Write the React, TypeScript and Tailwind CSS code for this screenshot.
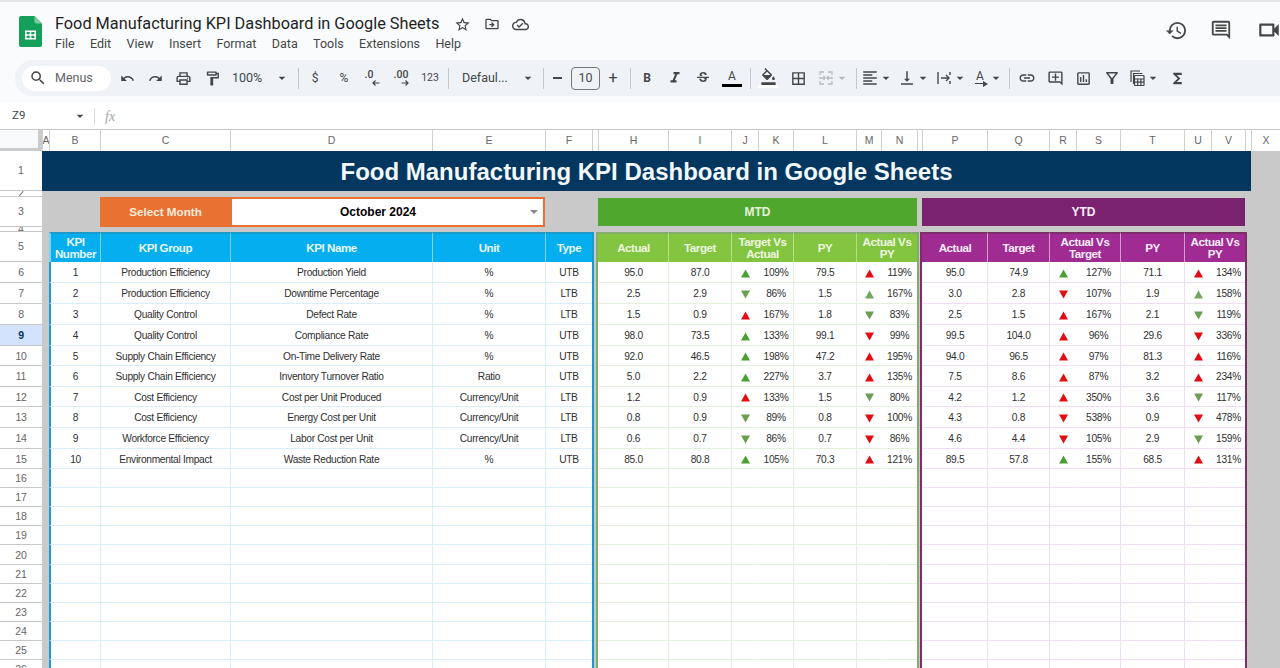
import type {ReactNode} from "react";
import {
    MdArrowDropDown,
    MdBorderAll,
    MdFormatAlignLeft,
    MdFormatColorFill,
    MdFormatItalic,
    MdFunctions,
    MdHistory,
    MdLink,
    MdOutlineAddComment,
    MdOutlineCloudDone,
    MdOutlineComment,
    MdOutlineDriveFileMove,
    MdOutlineFilterAlt,
    MdOutlineFormatPaint,
    MdOutlineInsertChart,
    MdOutlineLocalPrintshop,
    MdOutlineStarBorder,
    MdOutlineVideocam,
    MdRedo,
    MdSearch,
    MdStrikethroughS,
    MdUndo,
    MdVerticalAlignBottom,
} from "react-icons/md";

const GRID = "grid grid-cols-[42px_7px_51px_130px_202px_113px_47px_6px_70px_63px_27px_35px_63px_25px_36px_5px_65px_62px_27px_44px_64px_27px_34px_6px_29px]";

type Tone = "ug" | "ul" | "dg" | "ur" | "dr";
type Metric = [string, string, Tone, string, string, Tone, string];

const KPIS = [
    ["1", "Production Efficiency", "Production Yield", "%", "UTB"],
    ["2", "Production Efficiency", "Downtime Percentage", "%", "LTB"],
    ["3", "Quality Control", "Defect Rate", "%", "LTB"],
    ["4", "Quality Control", "Compliance Rate", "%", "UTB"],
    ["5", "Supply Chain Efficiency", "On-Time Delivery Rate", "%", "UTB"],
    ["6", "Supply Chain Efficiency", "Inventory Turnover Ratio", "Ratio", "UTB"],
    ["7", "Cost Efficiency", "Cost per Unit Produced", "Currency/Unit", "LTB"],
    ["8", "Cost Efficiency", "Energy Cost per Unit", "Currency/Unit", "LTB"],
    ["9", "Workforce Efficiency", "Labor Cost per Unit", "Currency/Unit", "LTB"],
    ["10", "Environmental Impact", "Waste Reduction Rate", "%", "UTB"],
];

const MTD: Metric[] = [
    ["95.0", "87.0", "ug", "109%", "79.5", "ur", "119%"],
    ["2.5", "2.9", "dg", "86%", "1.5", "ul", "167%"],
    ["1.5", "0.9", "ur", "167%", "1.8", "dg", "83%"],
    ["98.0", "73.5", "ug", "133%", "99.1", "dr", "99%"],
    ["92.0", "46.5", "ug", "198%", "47.2", "ur", "195%"],
    ["5.0", "2.2", "ug", "227%", "3.7", "ur", "135%"],
    ["1.2", "0.9", "ur", "133%", "1.5", "dg", "80%"],
    ["0.8", "0.9", "dg", "89%", "0.8", "dr", "100%"],
    ["0.6", "0.7", "dg", "86%", "0.7", "dr", "86%"],
    ["85.0", "80.8", "ug", "105%", "70.3", "ur", "121%"],
];

const YTD: Metric[] = [
    ["95.0", "74.9", "ug", "127%", "71.1", "ur", "134%"],
    ["3.0", "2.8", "dr", "107%", "1.9", "ul", "158%"],
    ["2.5", "1.5", "ur", "167%", "2.1", "dg", "119%"],
    ["99.5", "104.0", "ur", "96%", "29.6", "dr", "336%"],
    ["94.0", "96.5", "ur", "97%", "81.3", "ur", "116%"],
    ["7.5", "8.6", "ur", "87%", "3.2", "ur", "234%"],
    ["4.2", "1.2", "ur", "350%", "3.6", "dg", "117%"],
    ["4.3", "0.8", "dr", "538%", "0.9", "dr", "478%"],
    ["4.6", "4.4", "dr", "105%", "2.9", "dg", "159%"],
    ["89.5", "57.8", "ug", "155%", "68.5", "ur", "131%"],
];

const ROW_HEIGHTS = ["h-[21px]", "h-[21px]", "h-[21px]", "h-[21px]", "h-[20px]", "h-[21px]", "h-[20px]", "h-[21px]", "h-[21px]", "h-[20px]"];
const EMPTY_ROWS = [16, 17, 18, 19, 20, 21, 22, 23, 24, 25, 26];
const COLUMNS = ["A", "B", "C", "D", "E", "F", "", "H", "I", "J", "K", "L", "M", "N", "", "P", "Q", "R", "S", "T", "U", "V", "", "X"];
const MENUS = ["File", "Edit", "View", "Insert", "Format", "Data", "Tools", "Extensions", "Help"];

const TONE_FILL: Record<Tone, string> = {
    ug: "#4a9f32",
    ul: "#6fa75c",
    dg: "#6a9f52",
    ur: "#e40c12",
    dr: "#e40c12",
};

const Tri = ({tone}: {tone: Tone}) => (
    <svg width="9" height="9" viewBox="0 0 9 9" fill={TONE_FILL[tone]}>
        <polygon points={tone[0] === "d" ? "0,0.5 9,0.5 4.5,8.5" : "4.5,0.5 9,8.5 0,8.5"}/>
    </svg>
);

const RowLabel = ({children, active, low}: {children: ReactNode; active?: boolean; low?: boolean}) => (
    <div className={`flex items-center justify-center overflow-hidden border-b border-[#c7c7c7] text-[10.5px] ${low ? "pt-[2px]" : "pt-px"} ${active ? "bg-[#d3e3fd] font-bold text-[#0b2f66]" : "bg-white text-[#666]"}`}>
        {children}
    </div>
);

const Gray = ({span}: {span?: string}) => <div className={`bg-[#c9c9c9] ${span ?? ""}`}/>;

const GapBG = () => <div className="border-l-2 border-r-2 border-l-[#1b9ac9] border-r-[#84ab6e] bg-[#c9c9c9]"/>;
const GapGP = () => <div className="border-l-2 border-r-2 border-l-[#84ab6e] border-r-[#7b2f69] bg-[#c9c9c9]"/>;
const GapP = () => <div className="border-l-2 border-l-[#7b2f69] bg-[#c9c9c9]"/>;

const BlueCell = ({children, first}: {children?: ReactNode; first?: boolean}) => (
    <div className={`flex items-center justify-center border-b border-[#d9eef8] bg-white pt-[2px] ${first ? "border-l-2 border-l-[#1b9ac9]" : "border-l"}`}>
        {children}
    </div>
);
// plain: no column line on the left, the cell belongs to the one before it
const GreenCell = ({children, plain}: {children?: ReactNode; plain?: boolean}) => (
    <div className={`flex items-center justify-center border-b border-l border-[#e2f0dc] bg-white pt-[2px] ${plain ? "border-l-transparent" : ""}`}>{children}</div>
);
const PurpleCell = ({children, plain}: {children?: ReactNode; plain?: boolean}) => (
    <div className={`flex items-center justify-center border-b border-l border-[#f1def4] bg-white pt-[2px] ${plain ? "border-l-transparent" : ""}`}>{children}</div>
);

const HeadCell = ({children, className}: {children: ReactNode; className: string}) => (
    <div className={`flex items-center justify-center border-l border-t-2 text-center text-[11.6px] font-bold leading-[12px] tracking-[-0.45px] ${className}`}>
        {children}
    </div>
);

const BLUE_HEAD = "border-l-[#7ed3f5] border-t-[#1b9ac9] bg-[#04aeef] text-[#e8f8ff]";
const GREEN_HEAD = "border-l-[#b5dc88] border-t-[#84ab6e] bg-[#83c441] text-[#eef7e0]";
const PURPLE_HEAD = "border-l-[#d39ccb] border-t-[#7b2f69] bg-[#a02b93] text-[#fbeefa]";

const Btn = ({w, children}: {w: string; children?: ReactNode}) => (
    <div className={`flex h-full shrink-0 items-center justify-center text-[#444746] ${w}`}>{children}</div>
);
const Sep = ({m}: {m: string}) => <div className={`h-[21px] w-px shrink-0 bg-[#c7c7c7] ${m}`}/>;
const Caret = ({light}: {light?: boolean}) => (
    <MdArrowDropDown size={16} className={`-ml-[1px] shrink-0 ${light ? "text-[#b8bbbd]" : "text-[#444746]"}`}/>
);

const SmallArrow = ({left}: {left?: boolean}) => (
    <svg width="8" height="6" viewBox="0 0 8 6" fill="none" stroke="#444746" strokeWidth="1.2" className="ml-[7px]">
        {left ? <path d="M7.5 3H1M3.5 .5 1 3l2.5 2.5"/> : <path d="M.5 3H7M4.5 .5 7 3 4.5 5.5"/>}
    </svg>
);

const SheetsLogo = () => (
    <svg width="23" height="31" viewBox="0 0 23 31" className="shrink-0">
        <path d="M2 0h13.5L23 7.5V29a2 2 0 0 1-2 2H2a2 2 0 0 1-2-2V2a2 2 0 0 1 2-2Z" fill="#14a05a"/>
        <path d="M15.5 0 23 7.5h-5.5a2 2 0 0 1-2-2Z" fill="#7ccba2"/>
        <path d="M6 14.5h11v9H6Zm1.6 1.5v2.3h3.1V16Zm4.7 0v2.3h3.1V16Zm-4.7 3.8V22h3.1v-2.2Zm4.7 0V22h3.1v-2.2Z" fill="#fff" fillRule="evenodd"/>
    </svg>
);

const MergeIcon = () => (
    <svg width="18" height="18" viewBox="0 0 18 18" fill="none" stroke="#b8bbbd" strokeWidth="1.3">
        <path d="M7 3H3v3M3 8v2M3 12v3h4M11 3h4v3M15 8v2M15 12v3h-4"/>
        <path d="M3.5 9H8M6.5 7 8 9l-1.5 2M14.5 9H10M11.5 7 10 9l1.5 2"/>
    </svg>
);

const OverflowIcon = () => (
    <svg width="18" height="18" viewBox="0 0 18 18" fill="none" stroke="#444746" strokeWidth="1.4">
        <path d="M3 3v12M15 3v3M15 12v3M6 9h8M11 6l3 3-3 3"/>
    </svg>
);

const RotateIcon = () => (
    <span className="relative flex h-[18px] w-[18px] flex-col items-center text-[12px] leading-[14px] text-[#444746]">
        A
        <span className="h-px w-[11px] bg-[#444746]"/>
        <svg width="5" height="6" viewBox="0 0 5 6" fill="#444746" className="absolute bottom-0 right-[1px]">
            <path d="M0 0l5 3-5 3Z"/>
        </svg>
    </span>
);

const TableIcon = () => (
    <svg width="18" height="18" viewBox="0 0 18 18" fill="none" stroke="#444746" strokeWidth="1.2">
        <path d="M3 13V2h9"/>
        <path d="M5.5 15V4.5h9"/>
        <rect x="6.5" y="6.5" width="9.5" height="10" rx=".5"/>
        <path d="M6.5 10h9.5M6.5 13.2h9.5M9.7 10v6.5M12.9 10v6.5"/>
    </svg>
);

export default function App() {
    return (
        <div className="flex h-[668px] w-[1280px] flex-col overflow-hidden bg-[#f9fbfd] font-[Roboto,sans-serif]">
            {/* title bar */}
            <div className="flex h-[60px] shrink-0 border-t-2 border-[#e3e3e3] pl-[19px]">
                <div className="pt-[14px]">
                    <SheetsLogo/>
                </div>
                <div className="ml-[13px] flex flex-col pt-[11px]">
                    <div className="flex h-[22px] items-center">
                        <span className="w-[399px] whitespace-nowrap text-[16.3px] text-[#1f1f1f]">Food Manufacturing KPI Dashboard in Google Sheets</span>
                        <MdOutlineStarBorder size={17} className="text-[#444746]"/>
                        <MdOutlineDriveFileMove size={16} className="ml-[13px] text-[#444746]"/>
                        <MdOutlineCloudDone size={17} className="ml-[12px] text-[#444746]"/>
                    </div>
                    <div className="-mt-px flex h-[20px] items-center gap-[15.4px] text-[12.5px] text-[#444746]">
                        {MENUS.map(m => <span key={m}>{m}</span>)}
                    </div>
                </div>
                <div className="ml-auto mb-[2px] flex items-center text-[#444746]">
                    <MdHistory size={23}/>
                    <MdOutlineComment size={22} className="ml-[22px]"/>
                    <MdOutlineVideocam size={26} className="-mr-[2px] ml-[24px]"/>
                </div>
            </div>

            {/* toolbar */}
            <div className="ml-[15px] flex h-[36px] shrink-0 items-center rounded-l-[18px] bg-[#eff3f8] pl-[7px] text-[#444746]">
                <div className="flex h-[25px] w-[89px] shrink-0 items-center rounded-full bg-white pl-[7px] text-[12.5px] text-[#5f6368]">
                    <MdSearch size={18} className="text-[#444746]"/>
                    <span className="ml-[8px]">Menus</span>
                </div>
                <Btn w="w-[28px] ml-[2px]"><MdUndo size={15}/></Btn>
                <Btn w="w-[28px]"><MdRedo size={15}/></Btn>
                <Btn w="w-[28px]"><MdOutlineLocalPrintshop size={17}/></Btn>
                <Btn w="w-[30px]"><MdOutlineFormatPaint size={17}/></Btn>
                <Btn w="w-[63px] pl-[5px] text-[12.5px]"><span className="w-[43px]">100%</span><Caret/></Btn>
                <Sep m="ml-[8px]"/>
                <Btn w="w-[28px] ml-[2px] text-[12px]">$</Btn>
                <Btn w="w-[28px] ml-px text-[12px]">%</Btn>
                <Btn w="w-[28px]">
                    <span className="flex flex-col items-start text-[10.5px] font-medium leading-[10px]">.0<SmallArrow left/></span>
                </Btn>
                <Btn w="w-[28px] ml-px">
                    <span className="flex flex-col items-start text-[10.5px] font-medium leading-[10px]">.00<SmallArrow/></span>
                </Btn>
                <Btn w="w-[28px] ml-px text-[10.5px]">123</Btn>
                <Sep m="ml-[4px]"/>
                <Btn w="w-[84px] ml-[3px] pl-[10px] justify-start text-[12.5px]"><span className="w-[64px] whitespace-nowrap">Defaul...</span><Caret/></Btn>
                <Sep m="ml-[7px]"/>
                <Btn w="w-[27px]"><span className="h-[1.5px] w-[9px] bg-[#444746]"/></Btn>
                <div className="flex h-[23px] w-[29px] shrink-0 items-center justify-center rounded-[4px] border border-[#747775] text-[12.5px]">10</div>
                <Btn w="w-[26px] text-[16px]">+</Btn>
                <Sep m="ml-[4px]"/>
                <Btn w="w-[28px] ml-[2px] text-[12px] font-bold">B</Btn>
                <Btn w="w-[28px]"><MdFormatItalic size={18}/></Btn>
                <Btn w="w-[28px]"><MdStrikethroughS size={16}/></Btn>
                <Btn w="w-[30px]">
                    <span className="flex flex-col items-center text-[12px] leading-[14px]">A<span className="mt-[1px] h-[3.5px] w-[20px] bg-black"/></span>
                </Btn>
                <Sep m="ml-[3px]"/>
                <Btn w="w-[28px] ml-[3px]">
                    <span className="flex flex-col items-center"><MdFormatColorFill size={17}/><span className="h-[3.5px] w-[20px] bg-white"/></span>
                </Btn>
                <Btn w="w-[28px] ml-[2px]"><MdBorderAll size={17}/></Btn>
                <Btn w="w-[36px] ml-[3px]"><MergeIcon/><Caret light/></Btn>
                <Sep m="ml-[5px]"/>
                <Btn w="w-[36px] ml-[2px]"><MdFormatAlignLeft size={18}/><Caret/></Btn>
                <Btn w="w-[37px] ml-px"><MdVerticalAlignBottom size={18}/><Caret/></Btn>
                <Btn w="w-[35px] ml-px"><OverflowIcon/><Caret/></Btn>
                <Btn w="w-[33px] ml-[2px]"><RotateIcon/><Caret/></Btn>
                <Sep m="ml-[5px]"/>
                <Btn w="w-[28px] ml-[3px]"><MdLink size={18}/></Btn>
                <Btn w="w-[28px]"><MdOutlineAddComment size={17}/></Btn>
                <Btn w="w-[28px]"><MdOutlineInsertChart size={17}/></Btn>
                <Btn w="w-[28px] ml-px"><MdOutlineFilterAlt size={18}/></Btn>
                <Btn w="w-[37px]"><TableIcon/><Caret/></Btn>
                <Btn w="w-[28px]"><MdFunctions size={17}/></Btn>
            </div>

            <div className="h-[7px] shrink-0"/>

            {/* formula bar */}
            <div className="flex h-[26px] shrink-0 items-center bg-white pl-[12px]">
                <span className="w-[60px] text-[11.5px] text-[#444746]">Z9</span>
                <MdArrowDropDown size={16} className="text-[#444746]"/>
                <span className="ml-[6px] h-[17px] w-px bg-[#dadce0]"/>
                <span className="ml-[10px] font-['Liberation_Serif',serif] text-[14px] italic text-[#a0a4a8]">fx</span>
            </div>

            {/* sheet */}
            <div className="min-h-0 flex-1 overflow-hidden bg-[#c9c9c9] font-['Liberation_Sans',sans-serif]">
                <div className={`${GRID} h-[22px] border-t border-[#c7c7c7]`}>
                    <div className="border-b-[3px] border-r-[4px] border-[#c9cbcc] bg-[#f8f9fa]"/>
                    {COLUMNS.map((c, i) => (
                        <div key={i} className="flex items-center justify-center overflow-hidden border-l border-[#cfcfcf] bg-white text-[10.5px] text-[#666]">{c}</div>
                    ))}
                </div>

                <div className={`${GRID} h-[40px]`}>
                    <RowLabel>1</RowLabel>
                    <div className="col-span-23 flex items-center justify-center bg-[#03375f] pt-px text-[24px] font-bold text-[#f2f8fc]">
                        Food Manufacturing KPI Dashboard in Google Sheets
                    </div>
                    <Gray/>
                </div>

                <div className={`${GRID} h-[6px]`}>
                    <RowLabel>2</RowLabel>
                    <Gray span="col-span-24"/>
                </div>

                <div className={`${GRID} h-[30px]`}>
                    <RowLabel>3</RowLabel>
                    <Gray span="col-span-2"/>
                    <div className="flex items-center justify-center bg-[#e97132] pl-px text-[11.7px] font-bold text-[#fdebdc]">Select Month</div>
                    <div className="col-span-2 flex items-center border-2 border-[#e97132] bg-white">
                        <span className="flex-1 pr-[6px] text-center text-[12px] font-bold text-black">October 2024</span>
                        <span className="mr-[5px] h-0 w-0 border-x-[4px] border-t-[4px] border-x-transparent border-t-[#8a8a8a]"/>
                    </div>
                    <Gray span="col-span-2"/>
                    <div className="col-span-7 my-[1px] flex items-center justify-center bg-[#4fa72e] text-[12px] font-bold text-[#e4f3dc]">MTD</div>
                    <Gray/>
                    <div className="col-span-7 my-[1px] flex items-center justify-center bg-[#7a216f] text-[12px] font-bold text-[#fbeefa]">YTD</div>
                    <Gray span="col-span-2"/>
                </div>

                <div className={`${GRID} h-[5px]`}>
                    <RowLabel>4</RowLabel>
                    <Gray span="col-span-24"/>
                </div>

                <div className={`${GRID} h-[30px]`}>
                    <RowLabel>5</RowLabel>
                    <Gray/>
                    <HeadCell className={`${BLUE_HEAD} border-l-2 border-l-[#1b9ac9]`}>KPI Number</HeadCell>
                    <HeadCell className={BLUE_HEAD}>KPI Group</HeadCell>
                    <HeadCell className={BLUE_HEAD}>KPI Name</HeadCell>
                    <HeadCell className={BLUE_HEAD}>Unit</HeadCell>
                    <HeadCell className={BLUE_HEAD}>Type</HeadCell>
                    <GapBG/>
                    <HeadCell className={`${GREEN_HEAD} border-l-transparent`}>Actual</HeadCell>
                    <HeadCell className={GREEN_HEAD}>Target</HeadCell>
                    <HeadCell className={`${GREEN_HEAD} col-span-2`}>Target Vs Actual</HeadCell>
                    <HeadCell className={GREEN_HEAD}>PY</HeadCell>
                    <HeadCell className={`${GREEN_HEAD} col-span-2`}>Actual Vs PY</HeadCell>
                    <GapGP/>
                    <HeadCell className={`${PURPLE_HEAD} border-l-transparent`}>Actual</HeadCell>
                    <HeadCell className={PURPLE_HEAD}>Target</HeadCell>
                    <HeadCell className={`${PURPLE_HEAD} col-span-2`}>Actual Vs Target</HeadCell>
                    <HeadCell className={PURPLE_HEAD}>PY</HeadCell>
                    <HeadCell className={`${PURPLE_HEAD} col-span-2`}>Actual Vs PY</HeadCell>
                    <GapP/>
                    <Gray/>
                </div>

                {KPIS.map((kpi, i) => (
                    <div key={kpi[0]} className={`${GRID} ${ROW_HEIGHTS[i]} text-[10.2px] tracking-[-0.3px] text-[#2f2f2f]`}>
                        <RowLabel low active={i === 3}>{i + 6}</RowLabel>
                        <Gray/>
                        <BlueCell first>{kpi[0]}</BlueCell>
                        <BlueCell>{kpi[1]}</BlueCell>
                        <BlueCell>{kpi[2]}</BlueCell>
                        <BlueCell>{kpi[3]}</BlueCell>
                        <BlueCell>{kpi[4]}</BlueCell>
                        <GapBG/>
                        <GreenCell plain>{MTD[i][0]}</GreenCell>
                        <GreenCell>{MTD[i][1]}</GreenCell>
                        <GreenCell><Tri tone={MTD[i][2]}/></GreenCell>
                        <GreenCell plain>{MTD[i][3]}</GreenCell>
                        <GreenCell>{MTD[i][4]}</GreenCell>
                        <GreenCell><Tri tone={MTD[i][5]}/></GreenCell>
                        <GreenCell plain>{MTD[i][6]}</GreenCell>
                        <GapGP/>
                        <PurpleCell plain>{YTD[i][0]}</PurpleCell>
                        <PurpleCell>{YTD[i][1]}</PurpleCell>
                        <PurpleCell><Tri tone={YTD[i][2]}/></PurpleCell>
                        <PurpleCell plain>{YTD[i][3]}</PurpleCell>
                        <PurpleCell>{YTD[i][4]}</PurpleCell>
                        <PurpleCell><Tri tone={YTD[i][5]}/></PurpleCell>
                        <PurpleCell plain>{YTD[i][6]}</PurpleCell>
                        <GapP/>
                        <Gray/>
                    </div>
                ))}

                {EMPTY_ROWS.map(n => (
                    <div key={n} className={`${GRID} ${n === 20 ? "h-[20px]" : "h-[19px]"}`}>
                        <RowLabel low>{n}</RowLabel>
                        <Gray/>
                        <BlueCell first/>
                        <BlueCell/>
                        <BlueCell/>
                        <BlueCell/>
                        <BlueCell/>
                        <GapBG/>
                        <GreenCell plain/>
                        <GreenCell/>
                        <GreenCell/>
                        <GreenCell plain/>
                        <GreenCell/>
                        <GreenCell/>
                        <GreenCell plain/>
                        <GapGP/>
                        <PurpleCell plain/>
                        <PurpleCell/>
                        <PurpleCell/>
                        <PurpleCell plain/>
                        <PurpleCell/>
                        <PurpleCell/>
                        <PurpleCell plain/>
                        <GapP/>
                        <Gray/>
                    </div>
                ))}
            </div>
        </div>
    );
}
